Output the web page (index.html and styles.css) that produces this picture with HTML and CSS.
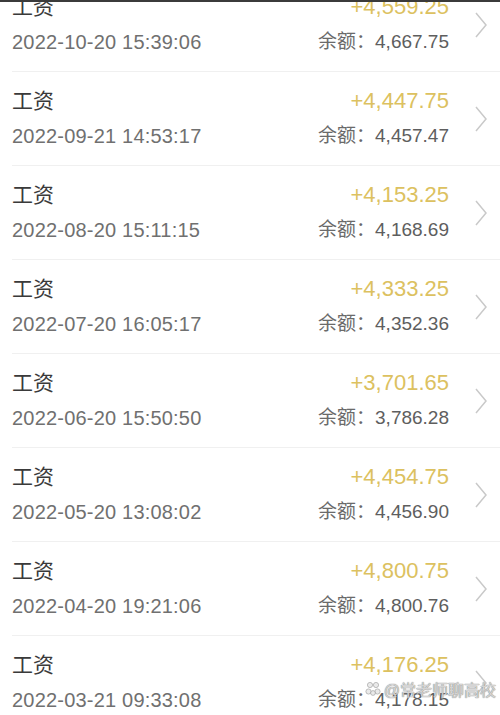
FILE: index.html
```html
<!DOCTYPE html>
<html>
  <head>
    <meta name="viewport" content="width=device-width, initial-scale=1.0, user-scalable=no">
    <link rel="stylesheet" href="styles.css">
  </head>
  <body>
    <div id="screen">
      <div id="records">
        <div class="record">
          <div class="record__body">
            <div class="record__left">
              <div class="record__title">工资</div>
              <div class="record__time">2022-10-20 15:39:06</div>
            </div>
            <div class="record__right">
              <div class="record__amount">+4,559.25</div>
              <div class="record__balance"><span class="record__label">余额：</span>4,667.75</div>
            </div>
            <svg class="record__arrow" width="12" height="26" viewBox="0 0 12 26"><polyline points="1,1 11,13 1,25" /></svg>
          </div>
        </div>
        <div class="record">
          <div class="record__body">
            <div class="record__left">
              <div class="record__title">工资</div>
              <div class="record__time">2022-09-21 14:53:17</div>
            </div>
            <div class="record__right">
              <div class="record__amount">+4,447.75</div>
              <div class="record__balance"><span class="record__label">余额：</span>4,457.47</div>
            </div>
            <svg class="record__arrow" width="12" height="26" viewBox="0 0 12 26"><polyline points="1,1 11,13 1,25" /></svg>
          </div>
        </div>
        <div class="record">
          <div class="record__body">
            <div class="record__left">
              <div class="record__title">工资</div>
              <div class="record__time">2022-08-20 15:11:15</div>
            </div>
            <div class="record__right">
              <div class="record__amount">+4,153.25</div>
              <div class="record__balance"><span class="record__label">余额：</span>4,168.69</div>
            </div>
            <svg class="record__arrow" width="12" height="26" viewBox="0 0 12 26"><polyline points="1,1 11,13 1,25" /></svg>
          </div>
        </div>
        <div class="record">
          <div class="record__body">
            <div class="record__left">
              <div class="record__title">工资</div>
              <div class="record__time">2022-07-20 16:05:17</div>
            </div>
            <div class="record__right">
              <div class="record__amount">+4,333.25</div>
              <div class="record__balance"><span class="record__label">余额：</span>4,352.36</div>
            </div>
            <svg class="record__arrow" width="12" height="26" viewBox="0 0 12 26"><polyline points="1,1 11,13 1,25" /></svg>
          </div>
        </div>
        <div class="record">
          <div class="record__body">
            <div class="record__left">
              <div class="record__title">工资</div>
              <div class="record__time">2022-06-20 15:50:50</div>
            </div>
            <div class="record__right">
              <div class="record__amount">+3,701.65</div>
              <div class="record__balance"><span class="record__label">余额：</span>3,786.28</div>
            </div>
            <svg class="record__arrow" width="12" height="26" viewBox="0 0 12 26"><polyline points="1,1 11,13 1,25" /></svg>
          </div>
        </div>
        <div class="record">
          <div class="record__body">
            <div class="record__left">
              <div class="record__title">工资</div>
              <div class="record__time">2022-05-20 13:08:02</div>
            </div>
            <div class="record__right">
              <div class="record__amount">+4,454.75</div>
              <div class="record__balance"><span class="record__label">余额：</span>4,456.90</div>
            </div>
            <svg class="record__arrow" width="12" height="26" viewBox="0 0 12 26"><polyline points="1,1 11,13 1,25" /></svg>
          </div>
        </div>
        <div class="record">
          <div class="record__body">
            <div class="record__left">
              <div class="record__title">工资</div>
              <div class="record__time">2022-04-20 19:21:06</div>
            </div>
            <div class="record__right">
              <div class="record__amount">+4,800.75</div>
              <div class="record__balance"><span class="record__label">余额：</span>4,800.76</div>
            </div>
            <svg class="record__arrow" width="12" height="26" viewBox="0 0 12 26"><polyline points="1,1 11,13 1,25" /></svg>
          </div>
        </div>
        <div class="record">
          <div class="record__body">
            <div class="record__left">
              <div class="record__title">工资</div>
              <div class="record__time">2022-03-21 09:33:08</div>
            </div>
            <div class="record__right">
              <div class="record__amount">+4,176.25</div>
              <div class="record__balance"><span class="record__label">余额：</span>4,178.15</div>
            </div>
            <svg class="record__arrow" width="12" height="26" viewBox="0 0 12 26"><polyline points="1,1 11,13 1,25" /></svg>
          </div>
        </div>
      </div>
      <div id="watermark">
        <svg class="watermark__logo" width="16" height="16" viewBox="0 0 16 16">
          <circle cx="5" cy="4" r="2.6" />
          <circle cx="11" cy="4" r="2.6" />
          <circle cx="3.5" cy="10.5" r="2.6" />
          <circle cx="12.5" cy="10.5" r="2.6" />
          <circle cx="8" cy="12" r="2.4" />
        </svg>
        <span>@常老师聊高校</span>
      </div>
    </div>
  </body>
</html>
```

FILE: styles.css
```css
* {
  box-sizing: border-box;
}
html, body {
  margin: 0;
  height: 100%;
  background: #fff;
}
body {
  font-family: "Liberation Sans", "Noto Sans CJK SC", sans-serif;
}

#screen {
  position: relative;
  height: 715px;
  overflow: hidden;
  border-top: 2px solid #3b3b3b;
}
#records {
  margin-top: -24px;
}

.record {
  padding-left: 12px;
}
.record__body {
  display: flex;
  align-items: center;
  height: 94px;
  padding: 0 13px 0 0;
  border-bottom: 1px solid #f0f0f0;
}
.record__left {
  flex-grow: 1;
  display: flex;
  flex-direction: column;
  gap: 5px;
}
.record__right {
  display: flex;
  flex-direction: column;
  align-items: flex-end;
  gap: 5px;
  margin-right: 26px;
}
.record__title {
  font-size: 21px;
  line-height: 30px;
  color: #3a3a3a;
}
.record__time {
  font-size: 20px;
  line-height: 30px;
  color: #707070;
  letter-spacing: 0.2px;
}
.record__amount {
  font-size: 22px;
  line-height: 30px;
  color: #dcc160;
}
.record__balance {
  font-size: 19px;
  line-height: 30px;
  color: #5e5e5e;
}
.record__label {
  color: #6a6a6a;
}
.record__arrow polyline {
  fill: none;
  stroke: #c9c9c9;
  stroke-width: 1.5;
}

#watermark {
  position: absolute;
  right: 4px;
  bottom: 14px;
  display: flex;
  align-items: center;
  gap: 3px;
  font-size: 16px;
  color: rgba(225, 225, 225, 0.85);
  text-shadow: 0 0 1px #8a8a8a, 0 0 1px #8a8a8a;
}
.watermark__logo circle {
  fill: rgba(230, 230, 230, 0.85);
  stroke: #999;
  stroke-width: 0.6;
}
```
